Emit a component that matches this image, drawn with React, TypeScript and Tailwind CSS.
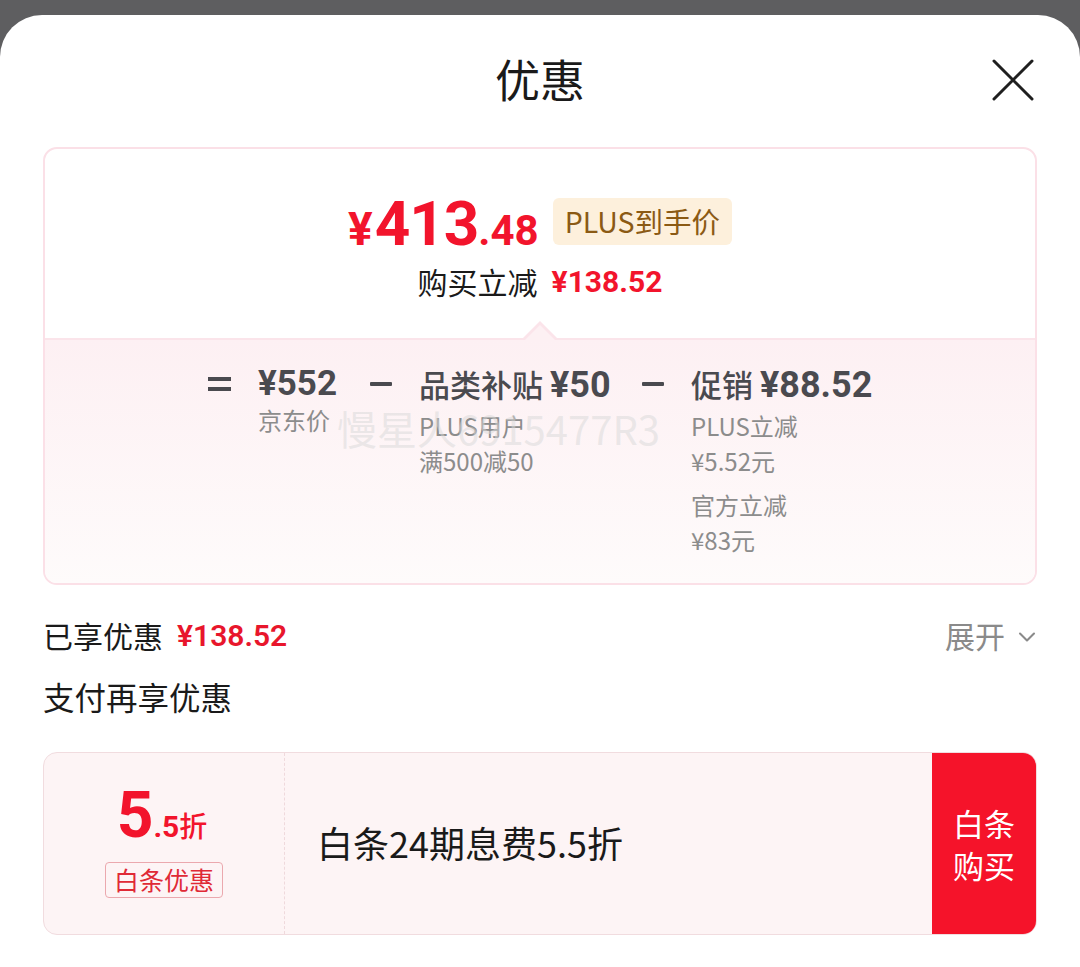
import { ChevronDown } from "lucide-react";

const CN = "font-['Noto_Sans_CJK_SC','Noto_Sans',sans-serif]";
const NUM = "font-['Roboto','Noto_Sans_CJK_SC',sans-serif]";

function CloseIcon() {
  return (
    <svg width="44" height="44" viewBox="0 0 44 44" fill="none">
      <path d="M3 3 L41 41 M41 3 L3 41" stroke="#1f1f1f" strokeWidth="3" strokeLinecap="round" />
    </svg>
  );
}

function Minus() {
  return (
    <div className="w-[49px] h-[44px] flex items-center">
      <div className="w-[22px] h-[4px] bg-[#4a4a4f] rounded-[1px]" />
    </div>
  );
}

function Breakdown() {
  return (
    <div className="relative flex-1 bg-gradient-to-b from-[#fdf0f3] to-[#fefbfb] border-t-2 border-[#fbe4ea] rounded-b-[12px]">
      {/* notch */}
      <div className="absolute left-[477px] -top-[19px] w-0 h-0 border-l-[18px] border-r-[18px] border-b-[18px] border-l-transparent border-r-transparent border-b-[#fbe4ea]" />
      <div className="absolute left-[479px] -top-[15px] w-0 h-0 border-l-[16px] border-r-[16px] border-b-[16px] border-l-transparent border-r-transparent border-b-[#fdf0f3]" />

      <div className="flex pl-[163px] pt-[22px] text-[#4a4a4f]">
        <div className="w-[50px] h-[44px] flex flex-col justify-center gap-[6px]">
          <div className="w-[23px] h-[4px] bg-[#4a4a4f]" />
          <div className="w-[23px] h-[4px] bg-[#4a4a4f]" />
        </div>
        <div className="w-[112px]">
          <div className={`${NUM} text-[35px] font-bold leading-[44px]`}>¥552</div>
          <div className={`${CN} text-[24px] text-[#8c8c8c] leading-[35px] -mt-[4px]`}>京东价</div>
        </div>
        <Minus />
        <div className="w-[223px]">
          <div className="leading-[44px] whitespace-nowrap">
            <span className={`${CN} font-medium text-[31px]`}>品类补贴 </span>
            <span className={`${NUM} font-bold text-[36px]`}>¥50</span>
          </div>
          <div className={`${CN} text-[24px] text-[#8c8c8c] leading-[35px] -mt-[4px]`}>
            <div>PLUS用户</div>
            <div>满500减50</div>
          </div>
        </div>
        <Minus />
        <div>
          <div className="leading-[44px] whitespace-nowrap">
            <span className={`${CN} font-medium text-[31px]`}>促销 </span>
            <span className={`${NUM} font-bold text-[36px]`}>¥88.52</span>
          </div>
          <div className={`${CN} text-[24px] text-[#8c8c8c] leading-[35px] -mt-[4px]`}>
            <div>PLUS立减</div>
            <div>¥5.52元</div>
            <div className="mt-[9px]">官方立减</div>
            <div>¥83元</div>
          </div>
        </div>
      </div>

      <div className={`${CN} absolute left-[292px] top-[58px] text-[40px] text-[#d8d8d8]/50 pointer-events-none`}>
        慢星人6915477R3
      </div>
    </div>
  );
}

export default function App() {
  return (
    <div className={`${CN} w-[1080px] h-[967px] bg-[#5e5e60] pt-[15px] overflow-hidden`}>
      <div className="bg-white rounded-t-[42px] h-full">
        {/* header */}
        <div className="relative h-[132px] flex items-center justify-center">
          <div className="text-[45px] font-normal text-[#1a1a1a] -mt-[4px]">优惠</div>
          <div className="absolute right-[45px] top-[43px]">
            <CloseIcon />
          </div>
        </div>

        <div className="px-[43px]">
          {/* price card */}
          <div className="h-[438px] border-2 border-[#fbe0e7] rounded-[14px] flex flex-col">
            <div className="h-[189px] flex flex-col items-center pt-[44px]">
              <div className="flex items-end gap-[14px]">
                <div className={`${NUM} text-[#f2142c] font-bold leading-none flex items-baseline`}>
                  <span className="text-[46px] mr-[2px]">¥</span>
                  <span className="text-[62px] tracking-[-1px]">413</span>
                  <span className="text-[42px]">.48</span>
                </div>
                <div className="bg-[#fdf0dc] text-[#8b5a14] text-[28.5px] rounded-[6px] px-[12px] h-[47px] flex items-center mb-[10px]">
                  PLUS到手价
                </div>
              </div>
              <div className="mt-[4px] flex items-center gap-[14px]">
                <span className="text-[30px] text-[#1a1a1a]">购买立减</span>
                <span className={`${NUM} text-[30px] text-[#f2142c] font-bold`}>¥138.52</span>
              </div>
            </div>
            <Breakdown />
          </div>

          {/* enjoyed */}
          <div className="flex items-center justify-between mt-[28px] h-[44px]">
            <div className="flex items-center gap-[14px]">
              <span className="text-[30px] text-[#1a1a1a]">已享优惠</span>
              <span className={`${NUM} text-[30px] text-[#e8162c] font-semibold`}>¥138.52</span>
            </div>
            <div className="flex items-center gap-[8px] text-[#8a8a8a]">
              <span className="text-[30px]">展开</span>
              <ChevronDown size={28} strokeWidth={1.8} className="mt-[4px] -mr-[4px]" />
            </div>
          </div>

          <div className="mt-[17px] text-[31.5px] text-[#1a1a1a] leading-[44px]">支付再享优惠</div>

          {/* baitiao card */}
          <div className="mt-[34px] h-[183px] flex rounded-[14px] border border-[#f1dcdf] bg-[#fdf4f5] overflow-hidden">
            <div className="w-[241px] flex flex-col items-center justify-center border-r border-dashed border-[#efd9dc]">
              <div className="flex items-baseline text-[#f2142c] font-bold leading-none -ml-[4px] -mt-[6px]">
                <span className={`${NUM} text-[64px]`}>5</span>
                <span className={`${NUM} text-[30px]`}>.5</span>
                <span className="text-[28px] font-medium">折</span>
              </div>
              <div className="mt-[14px] border border-[#eba8ae] rounded-[4px] px-[8px] h-[36px] flex items-center text-[25px] text-[#e02a36]">
                白条优惠
              </div>
            </div>
            <div className="flex-1 flex items-center pl-[32px] text-[36px] text-[#1a1a1a] -mt-[4px]">
              白条24期息费5.5折
            </div>
            <div className="w-[104px] bg-[#f5132a] flex flex-col items-center justify-center text-white text-[31px] leading-[42px]">
              <div>白条</div>
              <div>购买</div>
            </div>
          </div>
        </div>
      </div>
    </div>
  );
}
